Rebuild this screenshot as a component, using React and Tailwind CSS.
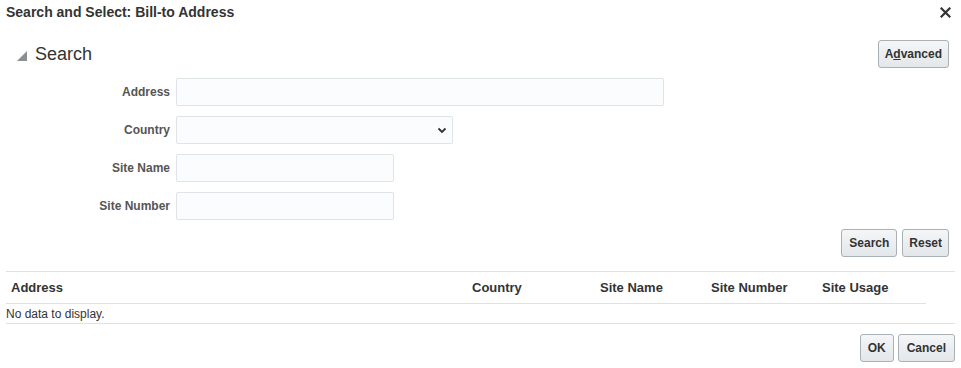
import React from 'react';

const font = { fontFamily: '"Liberation Sans", Arial, sans-serif' };

function Btn({ children, className = 'px-[6px]' }) {
  return (
    <button
      className={`h-[28px] rounded-[3px] border border-[#a9b0b6] bg-gradient-to-b from-[#f4f6f8] to-[#e3e7ea] text-[12px] font-bold text-[#333] leading-none ${className}`}
    >
      {children}
    </button>
  );
}

function Field({ label, children }) {
  return (
    <div className="flex items-center h-[28px]">
      <label className="w-[170px] text-right text-[12px] font-bold text-[#555]">{label}</label>
      <div className="ml-[6px]">{children}</div>
    </div>
  );
}

export default function App() {
  return (
    <div style={font} className="w-[961px] h-[368px] bg-white text-[#333] relative overflow-hidden">
      {/* title bar */}
      <div className="flex items-center justify-between h-[24px] pl-[6px] pr-[10px]">
        <h1 className="text-[14px] font-bold text-[#333]">Search and Select: Bill-to Address</h1>
        <svg width="11" height="11" viewBox="0 0 11 11" className="mt-[1px]">
          <path d="M1.5 1.5 L9.5 9.5 M9.5 1.5 L1.5 9.5" stroke="#333" strokeWidth="2.2" strokeLinecap="square" />
        </svg>
      </div>

      {/* search header */}
      <div className="flex items-center justify-between mt-[16px] h-[28px] pl-[17px] pr-[12px]">
        <div className="flex items-center">
          <svg width="10" height="10" viewBox="0 0 10 10" className="mt-[3px]">
            <polygon points="10,0 10,10 0,10" fill="#8a8f93" />
          </svg>
          <span className="ml-[8px] text-[18px] text-[#333]">Search</span>
        </div>
        <Btn>
          A<span className="underline">d</span>vanced
        </Btn>
      </div>

      {/* form */}
      <div className="flex flex-col gap-[10px] mt-[10px]">
        <Field label="Address">
          <div className="w-[488px] h-[28px] bg-[#fbfcfd] border border-[#dfe4e7] rounded-[2px]" />
        </Field>
        <Field label="Country">
          <div className="w-[277px] h-[28px] bg-[#fbfcfd] border border-[#dfe4e7] rounded-[2px] flex items-center justify-end pr-[5px]">
            <svg width="10" height="7" viewBox="0 0 10 7">
              <path d="M1.5 1.5 L5 5 L8.5 1.5" fill="none" stroke="#333" strokeWidth="1.8" />
            </svg>
          </div>
        </Field>
        <Field label="Site Name">
          <div className="w-[218px] h-[28px] bg-[#fbfcfd] border border-[#dfe4e7] rounded-[2px]" />
        </Field>
        <Field label="Site Number">
          <div className="w-[218px] h-[28px] bg-[#fbfcfd] border border-[#dfe4e7] rounded-[2px]" />
        </Field>
      </div>

      <div className="flex justify-end gap-[5px] mt-[9px] pr-[12px]">
        <Btn className="px-[7px]">Search</Btn>
        <Btn>Reset</Btn>
      </div>

      {/* table */}
      <div className="mt-[14px] mx-[6px] border-t border-[#dde2e5]">
        <div className="flex items-center h-[32px] w-[920px] border-b border-[#dde2e5] text-[13px] font-bold text-[#333]">
          <div className="w-[466px] pl-[5px]">Address</div>
          <div className="w-[128px]">Country</div>
          <div className="w-[111px]">Site Name</div>
          <div className="w-[111px]">Site Number</div>
          <div>Site Usage</div>
        </div>
        <div className="h-[20px] flex items-center text-[12px] text-[#333] border-b border-[#dde2e5]">No data to display.</div>
      </div>

      <div className="flex justify-end gap-[4px] mt-[10px] pr-[6px]">
        <Btn className="px-[7px]">OK</Btn>
        <Btn className="px-[8px]">Cancel</Btn>
      </div>
    </div>
  );
}
